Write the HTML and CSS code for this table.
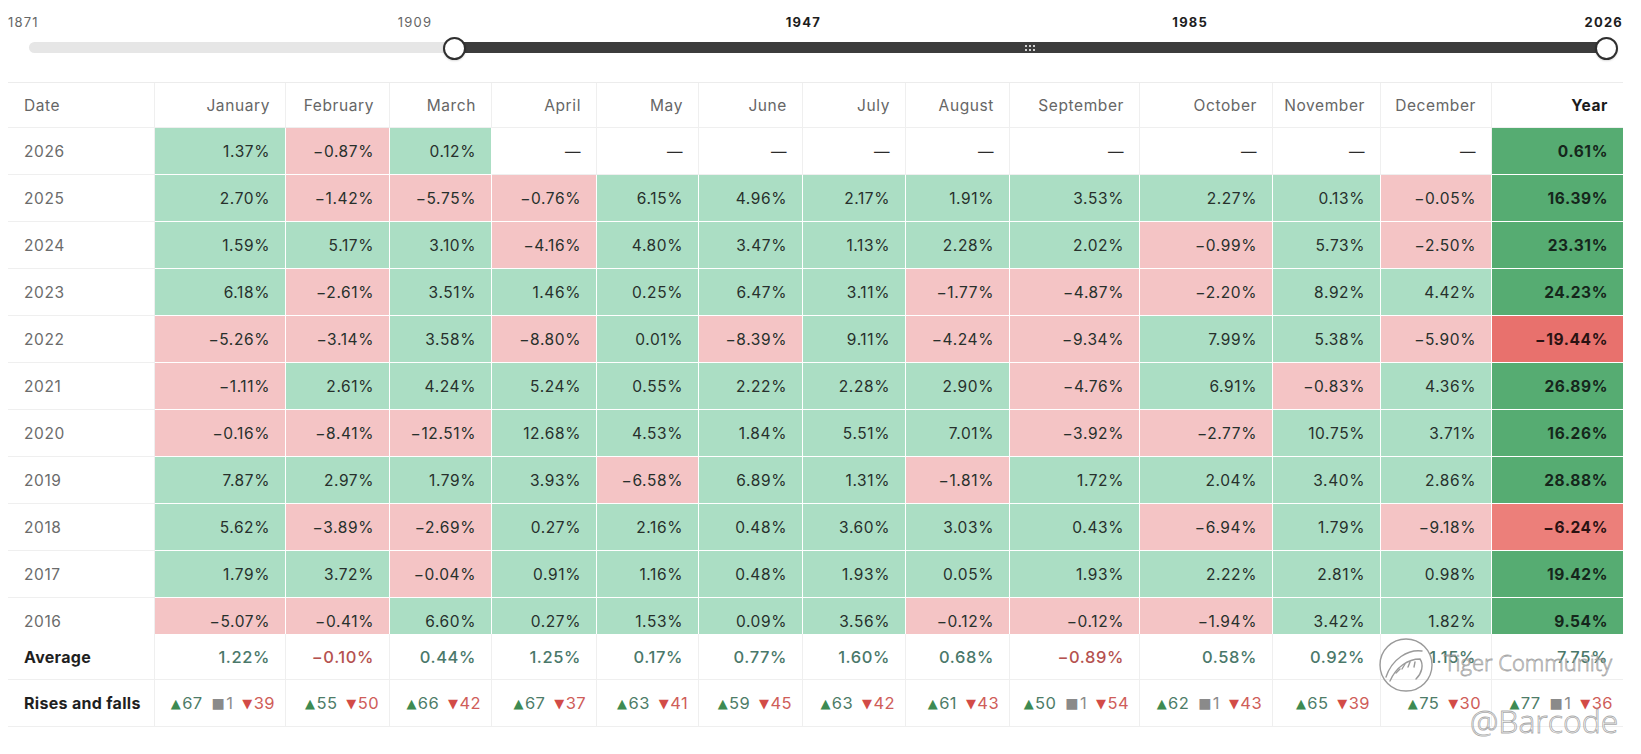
FILE: index.html
```html
<!DOCTYPE html>
<html lang="en">
<head>
<meta charset="utf-8">
<title>Monthly returns</title>
<link rel="stylesheet" href="styles.css">
</head>
<body>
<div class="page">
  <div class="slider">
    <div class="ticks">
      <span class="tick first">1871</span>
      <span class="tick mid" style="left:25.2%">1909</span>
      <span class="tick mid on" style="left:49.25%">1947</span>
      <span class="tick mid on" style="left:73.2%">1985</span>
      <span class="tick last on">2026</span>
    </div>
    <div class="track">
      <div class="range" style="left:26.95%">
        <span class="grip"><i></i><i></i><i></i><i></i><i></i><i></i></span>
      </div>
      <span class="thumb" style="left:26.95%"></span>
      <span class="thumb" style="left:100%"></span>
    </div>
  </div>

  <div class="table">
    <div class="row head">
      <div class="c d">Date</div>
      <div class="c">January</div><div class="c">February</div><div class="c">March</div><div class="c">April</div>
      <div class="c">May</div><div class="c">June</div><div class="c">July</div><div class="c">August</div>
      <div class="c">September</div><div class="c">October</div><div class="c">November</div><div class="c">December</div>
      <div class="c y">Year</div>
    </div>

    <div class="body">
      <div class="row">
        <div class="c d">2026</div>
        <div class="c g">1.37%</div><div class="c r">−0.87%</div><div class="c g">0.12%</div>
        <div class="c e">—</div><div class="c e">—</div><div class="c e">—</div><div class="c e">—</div><div class="c e">—</div>
        <div class="c e">—</div><div class="c e">—</div><div class="c e">—</div><div class="c e">—</div>
        <div class="c y yg">0.61%</div>
      </div>
      <div class="row">
        <div class="c d">2025</div>
        <div class="c g">2.70%</div><div class="c r">−1.42%</div><div class="c r">−5.75%</div><div class="c r">−0.76%</div>
        <div class="c g">6.15%</div><div class="c g">4.96%</div><div class="c g">2.17%</div><div class="c g">1.91%</div>
        <div class="c g">3.53%</div><div class="c g">2.27%</div><div class="c g">0.13%</div><div class="c r">−0.05%</div>
        <div class="c y yg">16.39%</div>
      </div>
      <div class="row">
        <div class="c d">2024</div>
        <div class="c g">1.59%</div><div class="c g">5.17%</div><div class="c g">3.10%</div><div class="c r">−4.16%</div>
        <div class="c g">4.80%</div><div class="c g">3.47%</div><div class="c g">1.13%</div><div class="c g">2.28%</div>
        <div class="c g">2.02%</div><div class="c r">−0.99%</div><div class="c g">5.73%</div><div class="c r">−2.50%</div>
        <div class="c y yg">23.31%</div>
      </div>
      <div class="row">
        <div class="c d">2023</div>
        <div class="c g">6.18%</div><div class="c r">−2.61%</div><div class="c g">3.51%</div><div class="c g">1.46%</div>
        <div class="c g">0.25%</div><div class="c g">6.47%</div><div class="c g">3.11%</div><div class="c r">−1.77%</div>
        <div class="c r">−4.87%</div><div class="c r">−2.20%</div><div class="c g">8.92%</div><div class="c g">4.42%</div>
        <div class="c y yg">24.23%</div>
      </div>
      <div class="row">
        <div class="c d">2022</div>
        <div class="c r">−5.26%</div><div class="c r">−3.14%</div><div class="c g">3.58%</div><div class="c r">−8.80%</div>
        <div class="c g">0.01%</div><div class="c r">−8.39%</div><div class="c g">9.11%</div><div class="c r">−4.24%</div>
        <div class="c r">−9.34%</div><div class="c g">7.99%</div><div class="c g">5.38%</div><div class="c r">−5.90%</div>
        <div class="c y yr">−19.44%</div>
      </div>
      <div class="row">
        <div class="c d">2021</div>
        <div class="c r">−1.11%</div><div class="c g">2.61%</div><div class="c g">4.24%</div><div class="c g">5.24%</div>
        <div class="c g">0.55%</div><div class="c g">2.22%</div><div class="c g">2.28%</div><div class="c g">2.90%</div>
        <div class="c r">−4.76%</div><div class="c g">6.91%</div><div class="c r">−0.83%</div><div class="c g">4.36%</div>
        <div class="c y yg">26.89%</div>
      </div>
      <div class="row">
        <div class="c d">2020</div>
        <div class="c r">−0.16%</div><div class="c r">−8.41%</div><div class="c r">−12.51%</div><div class="c g">12.68%</div>
        <div class="c g">4.53%</div><div class="c g">1.84%</div><div class="c g">5.51%</div><div class="c g">7.01%</div>
        <div class="c r">−3.92%</div><div class="c r">−2.77%</div><div class="c g">10.75%</div><div class="c g">3.71%</div>
        <div class="c y yg">16.26%</div>
      </div>
      <div class="row">
        <div class="c d">2019</div>
        <div class="c g">7.87%</div><div class="c g">2.97%</div><div class="c g">1.79%</div><div class="c g">3.93%</div>
        <div class="c r">−6.58%</div><div class="c g">6.89%</div><div class="c g">1.31%</div><div class="c r">−1.81%</div>
        <div class="c g">1.72%</div><div class="c g">2.04%</div><div class="c g">3.40%</div><div class="c g">2.86%</div>
        <div class="c y yg">28.88%</div>
      </div>
      <div class="row">
        <div class="c d">2018</div>
        <div class="c g">5.62%</div><div class="c r">−3.89%</div><div class="c r">−2.69%</div><div class="c g">0.27%</div>
        <div class="c g">2.16%</div><div class="c g">0.48%</div><div class="c g">3.60%</div><div class="c g">3.03%</div>
        <div class="c g">0.43%</div><div class="c r">−6.94%</div><div class="c g">1.79%</div><div class="c r">−9.18%</div>
        <div class="c y yr yr-soft">−6.24%</div>
      </div>
      <div class="row">
        <div class="c d">2017</div>
        <div class="c g">1.79%</div><div class="c g">3.72%</div><div class="c r">−0.04%</div><div class="c g">0.91%</div>
        <div class="c g">1.16%</div><div class="c g">0.48%</div><div class="c g">1.93%</div><div class="c g">0.05%</div>
        <div class="c g">1.93%</div><div class="c g">2.22%</div><div class="c g">2.81%</div><div class="c g">0.98%</div>
        <div class="c y yg">19.42%</div>
      </div>
      <div class="row">
        <div class="c d">2016</div>
        <div class="c r">−5.07%</div><div class="c r">−0.41%</div><div class="c g">6.60%</div><div class="c g">0.27%</div>
        <div class="c g">1.53%</div><div class="c g">0.09%</div><div class="c g">3.56%</div><div class="c r">−0.12%</div>
        <div class="c r">−0.12%</div><div class="c r">−1.94%</div><div class="c g">3.42%</div><div class="c g">1.82%</div>
        <div class="c y yg">9.54%</div>
      </div>
    </div>

    <div class="row foot">
      <div class="c d lbl">Average</div>
      <div class="c pos">1.22%</div><div class="c neg">−0.10%</div><div class="c pos">0.44%</div><div class="c pos">1.25%</div>
      <div class="c pos">0.17%</div><div class="c pos">0.77%</div><div class="c pos">1.60%</div><div class="c pos">0.68%</div>
      <div class="c neg">−0.89%</div><div class="c pos">0.58%</div><div class="c pos">0.92%</div><div class="c pos">1.15%</div>
      <div class="c pos">7.75%</div>
    </div>
    <div class="row foot">
      <div class="c d lbl">Rises and falls</div>
      <div class="c rf"><span class="up"><i>▲</i>67</span><span class="eq"><i>■</i>1</span><span class="dn"><i>▼</i>39</span></div>
      <div class="c rf"><span class="up"><i>▲</i>55</span><span class="dn"><i>▼</i>50</span></div>
      <div class="c rf"><span class="up"><i>▲</i>66</span><span class="dn"><i>▼</i>42</span></div>
      <div class="c rf"><span class="up"><i>▲</i>67</span><span class="dn"><i>▼</i>37</span></div>
      <div class="c rf"><span class="up"><i>▲</i>63</span><span class="dn"><i>▼</i>41</span></div>
      <div class="c rf"><span class="up"><i>▲</i>59</span><span class="dn"><i>▼</i>45</span></div>
      <div class="c rf"><span class="up"><i>▲</i>63</span><span class="dn"><i>▼</i>42</span></div>
      <div class="c rf"><span class="up"><i>▲</i>61</span><span class="dn"><i>▼</i>43</span></div>
      <div class="c rf"><span class="up"><i>▲</i>50</span><span class="eq"><i>■</i>1</span><span class="dn"><i>▼</i>54</span></div>
      <div class="c rf"><span class="up"><i>▲</i>62</span><span class="eq"><i>■</i>1</span><span class="dn"><i>▼</i>43</span></div>
      <div class="c rf"><span class="up"><i>▲</i>65</span><span class="dn"><i>▼</i>39</span></div>
      <div class="c rf"><span class="up"><i>▲</i>75</span><span class="dn"><i>▼</i>30</span></div>
      <div class="c rf"><span class="up"><i>▲</i>77</span><span class="eq"><i>■</i>1</span><span class="dn"><i>▼</i>36</span></div>
    </div>
  </div>

  <div class="watermark">
    <svg class="wm-logo" width="56" height="56" viewBox="0 0 56 56" fill="none" stroke="#9a9a9a" stroke-width="1.4" stroke-linecap="round">
      <circle cx="28" cy="28" r="26"/>
      <path d="M8 40 C14 22 30 12 44 14"/>
      <path d="M12 44 C18 30 30 22 42 22 C46 28 44 36 38 42"/>
      <path d="M18 36 l4 -4 M24 32 l3 -5 M30 30 l2 -5 M36 30 l1 -5"/>
    </svg>
    <span class="wm-a">Tiger Community</span>
    <span class="wm-b">@Barcode</span>
  </div>
</div>
</body>
</html>
```

FILE: styles.css
```css
* { box-sizing: border-box; }

html, body {
  margin: 0;
  padding: 0;
  background: #ffffff;
}

body {
  font-family: Inter, "Noto Sans", "Liberation Sans", sans-serif;
  color: #2e3833;
}

.page {
  position: relative;
  width: 1641px;
  height: 754px;
  padding: 0 18px 0 8px;
  overflow: hidden;
}

/* ---------- range slider ---------- */
.slider {
  height: 82px;
  padding-top: 14px;
}

.ticks {
  position: relative;
  height: 16px;
  font-size: 13px;
  line-height: 16px;
  letter-spacing: 1.2px;
  color: #666666;
}

.tick {
  position: absolute;
  top: 0;
  white-space: nowrap;
}
.tick.first { left: 0; }
.tick.mid { transform: translateX(-50%); }
.tick.last { right: 0; }
.tick.on { color: #1d1d1d; font-weight: 700; }

.track {
  position: relative;
  height: 11px;
  margin: 12px 17px 0 21px;
  background: #e6e6e6;
  border-radius: 6px;
}

.range {
  position: absolute;
  top: 0;
  bottom: 0;
  right: 0;
  background: #3c3c3c;
  display: flex;
  align-items: center;
  justify-content: center;
}

.grip {
  display: grid;
  grid-template-columns: repeat(3, 2px);
  grid-auto-rows: 2px;
  gap: 2px 2px;
}
.grip i {
  display: block;
  width: 2px;
  height: 2px;
  background: #d0d0d0;
}

.thumb {
  position: absolute;
  top: 50%;
  width: 23px;
  height: 23px;
  margin: -11px 0 0 -11.5px;
  border-radius: 50%;
  background: #ffffff;
  border: 2px solid #2f2f2f;
  box-shadow: 0 1px 2px rgba(0, 0, 0, 0.15);
}

/* ---------- table ---------- */
.table {
  border-top: 1px solid #ececec;
  font-size: 15.5px;
  letter-spacing: 0.6px;
}

.row {
  display: grid;
  grid-template-columns: 147px 131px 104px 102px 105px 102px 104px 103px 104px 130px 133px 108px 111px 131px;
}

.c {
  height: 47px;
  display: flex;
  align-items: center;
  justify-content: flex-end;
  padding: 0 15px 0 10px;
  border-right: 1px solid #efefef;
  border-bottom: 1px solid #efefef;
  white-space: nowrap;
  color: #27302c;
}
.c:last-child { border-right: 0; }

.c.d {
  justify-content: flex-start;
  padding-left: 16px;
  color: #6b6b6b;
}

.head .c {
  height: 45px;
  color: #666666;
}
.head .c.y {
  color: #1c1c1c;
  font-weight: 700;
}

.body {
  height: 506px;
  overflow: hidden;
}

.c.g { background: #abdec4; border-color: #ffffff; }
.c.r { background: #f4c4c5; border-color: #ffffff; }
.c.e { color: #2b2b2b; }

.c.y.yg,
.c.y.yr {
  font-weight: 700;
  color: #15261b;
  border-color: #ffffff;
}
.c.yg { background: #56ac72; }
.c.y.yr { background: #e8716d; color: #2a1212; }
.c.y.yr-soft { background: #ec7f7a; }

.foot { font-size: 16.5px; }
.foot .c { height: 46px; }
.foot + .foot .c { height: 47px; }

.c.lbl {
  color: #1f1f1f;
  font-weight: 700;
  font-size: 16px;
  letter-spacing: 0.3px;
}

.c.pos { color: #4a786a; font-weight: 500; }
.c.neg { color: #b5524f; font-weight: 500; }

.c.rf {
  gap: 9px;
  padding-right: 10px;
  letter-spacing: 0.4px;
}
.rf span {
  display: inline-flex;
  align-items: center;
}
.rf i {
  font-style: normal;
  font-family: "DejaVu Sans", sans-serif;
  font-size: 13px;
  margin-right: 1px;
}
.rf .up { color: #4d7c68; }
.rf .up i { color: #3d8a52; }
.rf .eq { color: #8c8c8c; }
.rf .eq i { color: #8a8a8a; font-size: 14px; }
.rf .dn { color: #cf5d59; }
.rf .dn i { color: #d24b47; }

/* ---------- watermark overlay ---------- */
.watermark {
  position: absolute;
  left: 1378px;
  top: 637px;
  width: 250px;
  height: 110px;
  pointer-events: none;
}
.wm-logo {
  position: absolute;
  left: 0;
  top: 0;
}
.wm-a,
.wm-b {
  position: absolute;
  white-space: nowrap;
  font-family: "Open Sans", "Liberation Sans", sans-serif;
  font-weight: 300;
  color: rgba(255, 255, 255, 0.5);
  -webkit-text-stroke: 0.8px rgba(130, 130, 130, 0.7);
  letter-spacing: 0;
}
.wm-a {
  left: 66px;
  top: 10px;
  font-size: 22px;
}
.wm-b {
  left: 92px;
  top: 64px;
  font-size: 32px;
  line-height: 40px;
}
```
